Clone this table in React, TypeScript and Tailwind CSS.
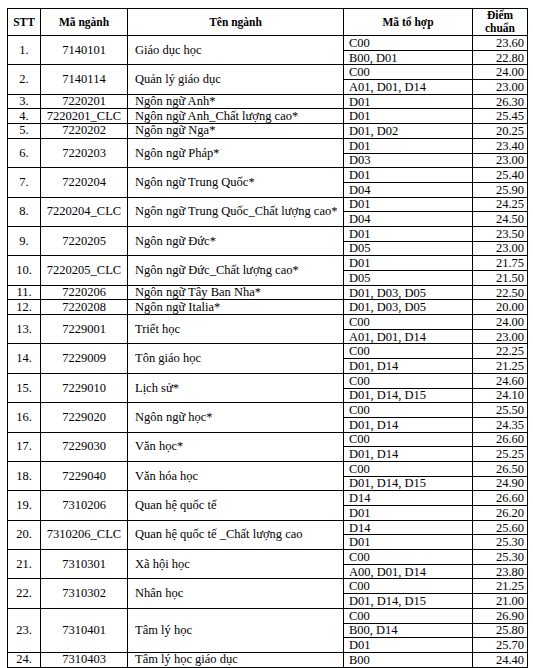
import React from 'react';

type Sub = [string, string];
type Row = { stt: string; code: string; name: string; subs: Sub[] };

const rows: Row[] = [
  { stt: '1.', code: '7140101', name: 'Giáo dục học', subs: [['C00', '23.60'], ['B00, D01', '22.80']] },
  { stt: '2.', code: '7140114', name: 'Quản lý giáo dục', subs: [['C00', '24.00'], ['A01, D01, D14', '23.00']] },
  { stt: '3.', code: '7220201', name: 'Ngôn ngữ Anh*', subs: [['D01', '26.30']] },
  { stt: '4.', code: '7220201_CLC', name: 'Ngôn ngữ Anh_Chất lượng cao*', subs: [['D01', '25.45']] },
  { stt: '5.', code: '7220202', name: 'Ngôn ngữ Nga*', subs: [['D01, D02', '20.25']] },
  { stt: '6.', code: '7220203', name: 'Ngôn ngữ Pháp*', subs: [['D01', '23.40'], ['D03', '23.00']] },
  { stt: '7.', code: '7220204', name: 'Ngôn ngữ Trung Quốc*', subs: [['D01', '25.40'], ['D04', '25.90']] },
  { stt: '8.', code: '7220204_CLC', name: 'Ngôn ngữ Trung Quốc_Chất lượng cao*', subs: [['D01', '24.25'], ['D04', '24.50']] },
  { stt: '9.', code: '7220205', name: 'Ngôn ngữ Đức*', subs: [['D01', '23.50'], ['D05', '23.00']] },
  { stt: '10.', code: '7220205_CLC', name: 'Ngôn ngữ Đức_Chất lượng cao*', subs: [['D01', '21.75'], ['D05', '21.50']] },
  { stt: '11.', code: '7220206', name: 'Ngôn ngữ Tây Ban Nha*', subs: [['D01, D03, D05', '22.50']] },
  { stt: '12.', code: '7220208', name: 'Ngôn ngữ Italia*', subs: [['D01, D03, D05', '20.00']] },
  { stt: '13.', code: '7229001', name: 'Triết học', subs: [['C00', '24.00'], ['A01, D01, D14', '23.00']] },
  { stt: '14.', code: '7229009', name: 'Tôn giáo học', subs: [['C00', '22.25'], ['D01, D14', '21.25']] },
  { stt: '15.', code: '7229010', name: 'Lịch sử*', subs: [['C00', '24.60'], ['D01, D14, D15', '24.10']] },
  { stt: '16.', code: '7229020', name: 'Ngôn ngữ học*', subs: [['C00', '25.50'], ['D01, D14', '24.35']] },
  { stt: '17.', code: '7229030', name: 'Văn học*', subs: [['C00', '26.60'], ['D01, D14', '25.25']] },
  { stt: '18.', code: '7229040', name: 'Văn hóa học', subs: [['C00', '26.50'], ['D01, D14, D15', '24.90']] },
  { stt: '19.', code: '7310206', name: 'Quan hệ quốc tế', subs: [['D14', '26.60'], ['D01', '26.20']] },
  { stt: '20.', code: '7310206_CLC', name: 'Quan hệ quốc tế _Chất lượng cao', subs: [['D14', '25.60'], ['D01', '25.30']] },
  { stt: '21.', code: '7310301', name: 'Xã hội học', subs: [['C00', '25.30'], ['A00, D01, D14', '23.80']] },
  { stt: '22.', code: '7310302', name: 'Nhân học', subs: [['C00', '21.25'], ['D01, D14, D15', '21.00']] },
  { stt: '23.', code: '7310401', name: 'Tâm lý học', subs: [['C00', '26.90'], ['B00, D14', '25.80'], ['D01', '25.70']] },
  { stt: '24.', code: '7310403', name: 'Tâm lý học giáo dục', subs: [['B00', '24.40']] }
];

const cell = 'bg-white flex items-center';

export default function App() {
  return (
    <div className="min-h-screen bg-white pt-[8px] pl-[7px] [font-family:'Liberation_Serif',serif] text-[12.5px] leading-[13px] text-black">
      <div className="w-[521px] border border-black bg-black flex flex-col gap-px">
        {/* header */}
        <div className="grid grid-cols-[32px_86px_215px_128px_54px] gap-px h-[26px] font-bold text-[11.5px]">
          <div className={`${cell} justify-center`}>STT</div>
          <div className={`${cell} justify-center`}>Mã ngành</div>
          <div className={`${cell} justify-center`}>Tên ngành</div>
          <div className={`${cell} justify-center`}>Mã tổ hợp</div>
          <div className="bg-white flex flex-col items-center justify-center leading-[13px]">
            <span>Điểm</span>
            <span>chuẩn</span>
          </div>
        </div>

        {rows.map((r) => (
          <div key={r.stt} className="grid grid-cols-[32px_86px_215px_183px] gap-px">
            <div className={`${cell} justify-center`}>{r.stt}</div>
            <div className={`${cell} justify-center`}>{r.code}</div>
            <div className={`${cell} pl-[7px] whitespace-nowrap`}>{r.name}</div>
            <div className="flex flex-col gap-px">
              {r.subs.map(([combo, score], i) => (
                <div key={i} className="grid grid-cols-[128px_54px] grid-rows-[13.7px] gap-px h-[13.7px] overflow-hidden">
                  <div className={`${cell} pl-[5px] pt-[1px] overflow-hidden`}>{combo}</div>
                  <div className={`${cell} justify-end pr-[3px] pt-[1px] overflow-hidden`}>{score}</div>
                </div>
              ))}
            </div>
          </div>
        ))}
      </div>
    </div>
  );
}
